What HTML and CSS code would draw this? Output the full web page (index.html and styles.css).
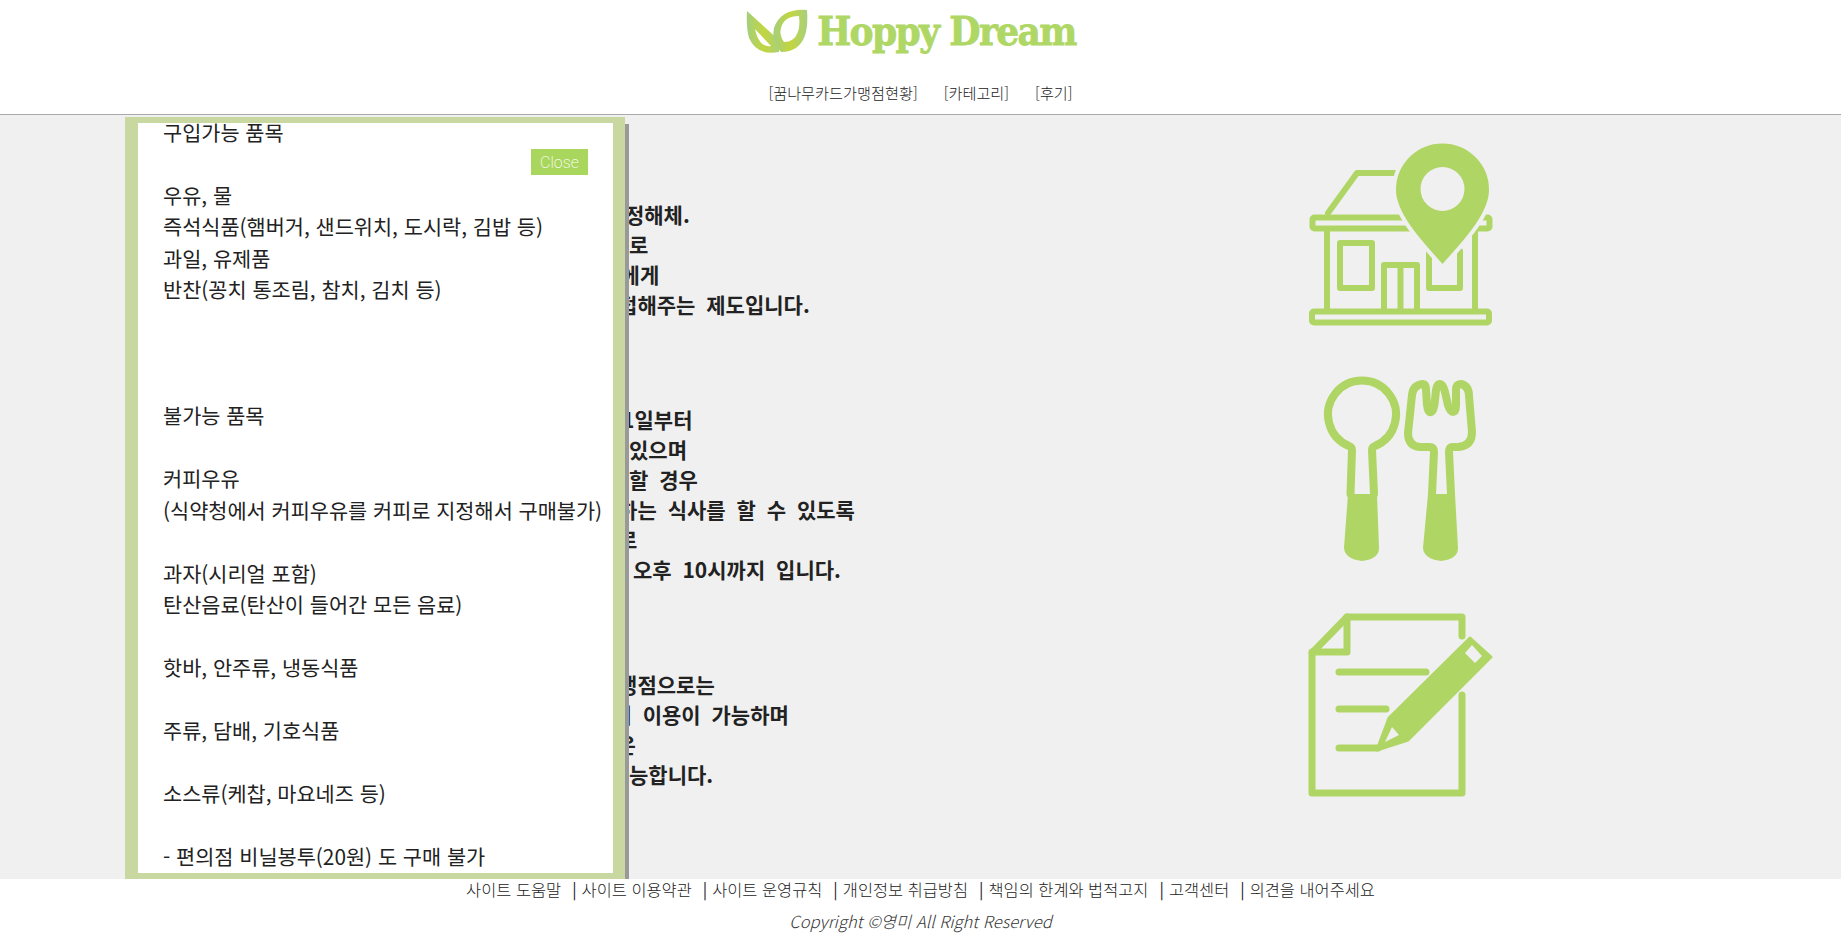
FILE: index.html
```html
<!DOCTYPE html>
<html lang="ko">
<head>
    <meta charset="UTF-8">
    <meta name="viewport" content="width=device-width, initial-scale=1.0">
    <title>Hoppy Dream</title>
    <link rel="stylesheet" href="styles.css">
</head>
<body>
    <header class="top">
        <div class="logo">
            <svg class="logo-mark" viewBox="0 0 90 60" width="90" height="60">
                <defs>
                    <linearGradient id="leaf" x1="0" y1="0" x2="1" y2="0">
                        <stop offset="0" stop-color="#a3cf7d"/>
                        <stop offset="0.5" stop-color="#c3d63f"/>
                        <stop offset="1" stop-color="#a8cf80"/>
                    </linearGradient>
                </defs>
                <path fill="url(#leaf)" fill-rule="evenodd" d="M10 9 L44 40 L42 50 Q20 54 12 36 Q9 25 10 9 Z M18 27 L34 44 Q22 46 18 27 Z"/>
                <path fill="url(#leaf)" fill-rule="evenodd" d="M70 8 Q44 6 37 26 Q34 38 44 50 Q64 50 69 30 Q71 20 70 8 Z M62 14 Q47 14 44 26 Q42 33 47 40 Q59 40 62 26 Q63 20 62 14 Z"/>
            </svg>
            <span class="logo-text">Hoppy Dream</span>
        </div>
        <nav class="menu">
            <a href="#">[꿈나무카드가맹점현황]</a>
            <a href="#">[카테고리]</a>
            <a href="#">[후기]</a>
        </nav>
    </header>

    <main class="info">
        <section class="row">
            <div class="copy">
                <p>꿈나무카드 저소득층 결식아동, 가정해체.</p>
                <p>끼니를 거를 우려 있는 가정형편으로</p>
                <p>생활이 어려운 지역 내 취학 아동에게</p>
                <p>방학기간에 따뜻한 저녁식사를 대접해주는 제도입니다.</p>
            </div>
            <svg class="pic" viewBox="0 0 240 210" width="240" height="210">
                <g fill="none" stroke="#afd564" stroke-width="6" stroke-linecap="round" stroke-linejoin="round">
                    <path d="M48 83 L77 43 H115"/>
                    <rect x="32.500" y="87.500" width="177" height="11" rx="2"/>
                    <path d="M47 100 V178 M195 100 V178"/>
                    <rect x="60" y="113" width="32" height="45"/>
                    <path d="M104 178 V135 H137 V178 M120.500 135 V178"/>
                    <path d="M149 121 V158 H180 V121"/>
                    <rect x="32" y="181.500" width="177" height="11" rx="2"/>
                </g>
                <path fill="#afd564" stroke="#f0f0f0" stroke-width="4" d="M162.500 137 C150 122 114 88 114 60 A48.500 48.500 0 0 1 211 60 C211 88 175 122 162.500 137 Z"/>
                <circle cx="162.500" cy="59" r="22" fill="#f0f0f0"/>
            </svg>
        </section>

        <section class="row">
            <div class="copy">
                <p>서울시 꿈나무카드는 2010년 7월1일부터</p>
                <p>사용처가 일반 음식점까지 늘어나 있으며</p>
                <p>어린이가 혼자서 식사를 해결해야 할 경우</p>
                <p>가까운 일반식당에서 아이들이 원하는 식사를 할 수 있도록</p>
                <p>지원하는 서울시 꿈나무카드 제도로</p>
                <p>사용 가능한 시간은 오전 8시에서 오후 10시까지 입니다.</p>
            </div>
            <svg class="pic" viewBox="0 0 220 220" width="220" height="220">
                <g fill="none" stroke="#afd564" stroke-width="8" stroke-linecap="round" stroke-linejoin="round">
                    <path d="M60.500 134 L62 90 Q62 87 59 86 A34 34 0 1 1 85 86 Q82 87 82 90 L84 134"/>
                    <path d="M142 134 L144 92 Q144 87 139 87 H130 Q118 86 118 73 L122 35 Q123 25 133 24 Q136 24 136 30 L137 45 Q138 53 141 52 Q144 52 145 40 L146 30 Q147 24 150 24 Q153 24 155 32 L158 45 Q160 52 163 52 Q166 52 166 45 L166 30 Q166 24 171 24 Q179 26 179 36 L182 72 Q182 86 168 87 H163 Q159 87 159 92 L161 134"/>
                </g>
                <path fill="#afd564" d="M58 134 H87 L89 188 Q89 199 72 201 Q55 199 54 188 Z"/>
                <path fill="#afd564" d="M138 134 H165 L168 188 Q168 199 151 201 Q134 199 133 188 Z"/>
            </svg>
        </section>

        <section class="row">
            <div class="copy">
                <p>일반음식점 중에서 꿈나무카드 가맹점으로는</p>
                <p>모든 편의점, 제과점, 일반식당에서 이용이 가능하며</p>
                <p>가맹점 위치와, 자세한 사용 방법은</p>
                <p>서울시청 홈페이지 에서 확인이 가능합니다.</p>
            </div>
            <svg class="pic" viewBox="0 0 220 210" width="220" height="210">
                <g fill="none" stroke="#afd564" stroke-width="7" stroke-linecap="round" stroke-linejoin="round">
                    <path d="M172 36 V17 H57 L22 53 V193 H172 V95"/>
                    <path d="M57 17 V52 H22"/>
                    <path d="M49 72 H136 M49 109 H96 M49 148 H88"/>
                </g>
                <path fill="#afd564" stroke="#afd564" stroke-width="3" stroke-linejoin="round" d="M180 38 L201 57 L118 140 L87 150 L99 118 Z"/>
                <path fill="#f0f0f0" d="M102 127 L109 135 L95 142 Z M182 45 L175 53 L185 63 L192 56 Z"/>
            </svg>
        </section>
    </main>

    <aside class="popup">
        <button class="close" type="button">Close</button>
        <div class="popup-text">
            구입가능 품목<br><br>
            우유, 물<br>
            즉석식품(햄버거, 샌드위치, 도시락, 김밥 등)<br>
            과일, 유제품<br>
            반찬(꽁치 통조림, 참치, 김치 등)<br><br><br><br>
            불가능 품목<br><br>
            커피우유<br>
            (식약청에서 커피우유를 커피로 지정해서 구매불가)<br><br>
            과자(시리얼 포함)<br>
            탄산음료(탄산이 들어간 모든 음료)<br><br>
            핫바, 안주류, 냉동식품<br><br>
            주류, 담배, 기호식품<br><br>
            소스류(케찹, 마요네즈 등)<br><br>
            - 편의점 비닐봉투(20원) 도 구매 불가
        </div>
    </aside>

    <footer class="bottom">
        <ul class="links">
            <li>사이트 도움말</li>
            <li><b>|</b>사이트 이용약관</li>
            <li><b>|</b>사이트 운영규칙</li>
            <li><b>|</b>개인정보 취급방침</li>
            <li><b>|</b>책임의 한계와 법적고지</li>
            <li><b>|</b>고객센터</li>
            <li><b>|</b>의견을 내어주세요</li>
        </ul>
        <p class="copyright">Copyright ©영미 All Right Reserved</p>
    </footer>
</body>
</html>
```

FILE: styles.css
```css
body {
    margin: 0;
    height: 951px;
    overflow: hidden;
    background-color: white;
    color: #222;
    font-family: "Noto Sans CJK KR", "Noto Sans", sans-serif;
}
a {
    color: #222;
    text-decoration: none;
}
.top {
    height: 114px;
    border-bottom: 1px solid #aaa;
    display: flex;
    flex-direction: column;
    align-items: center;
}
.logo {
    height: 62px;
    margin-top: 2px;
    margin-left: -28px;
    display: flex;
    align-items: flex-start;
}
.logo-text {
    margin-left: -10px;
    margin-top: 3px;
    font-family: "DejaVu Serif", serif;
    font-size: 40px;
    font-weight: bold;
    font-stretch: condensed;
    letter-spacing: -1.600px;
    line-height: 52px;
    color: #afd766;
    -webkit-text-stroke: 0.8px #afd766;
}
.menu {
    display: flex;
    gap: 26px;
    margin-top: 16px;
    font-size: 15.200px;
    font-weight: 300;
    line-height: 24px;
}
.info {
    height: 764px;
    background-color: #f0f0f0;
    box-sizing: border-box;
    padding-top: 2px;
}
.row {
    height: 235px;
    display: grid;
    grid-template-columns: 1fr 240px;
    padding-right: 321px;
    align-items: center;
}
.copy {
    padding-left: 315px;
    padding-top: 48px;
    font-size: 21px;
    font-weight: 700;
    word-spacing: 5px;
    line-height: 30px;
}
.copy p {
    margin: 0;
}
.pic {
    justify-self: center;
}
.popup {
    position: absolute;
    top: 117px;
    left: 125px;
    width: 500px;
    height: 762px;
    box-sizing: border-box;
    border: solid #c8d8a0;
    border-width: 6px 12px 6px 13px;
    background-color: white;
    box-shadow: 4px 7px 0 #999;
    overflow: hidden;
}
.popup-text {
    margin-top: -6.500px;
    padding-left: 25px;
    font-size: 20.800px;
    line-height: 31.500px;
    white-space: nowrap;
}
.close {
    position: absolute;
    top: 26px;
    right: 25px;
    width: 57px;
    height: 26px;
    padding: 0;
    border: none;
    background-color: #a9d65c;
    color: white;
    font-family: Roboto, sans-serif;
    font-size: 16px;
    font-weight: 200;
}
.bottom {
    position: relative;
    height: 72px;
    background-color: white;
    text-align: center;
}
.links {
    display: flex;
    justify-content: center;
    gap: 11px;
    margin: 0;
    padding: 0;
    list-style: none;
    font-size: 16.400px;
    font-weight: 300;
    line-height: 21px;
    color: #222;
}
.links b {
    margin-right: 5px;
}
.copyright {
    margin: 10px 0 0;
    font-size: 16.600px;
    line-height: 22px;
    font-style: italic;
    font-weight: 300;
    color: #333;
}
```
